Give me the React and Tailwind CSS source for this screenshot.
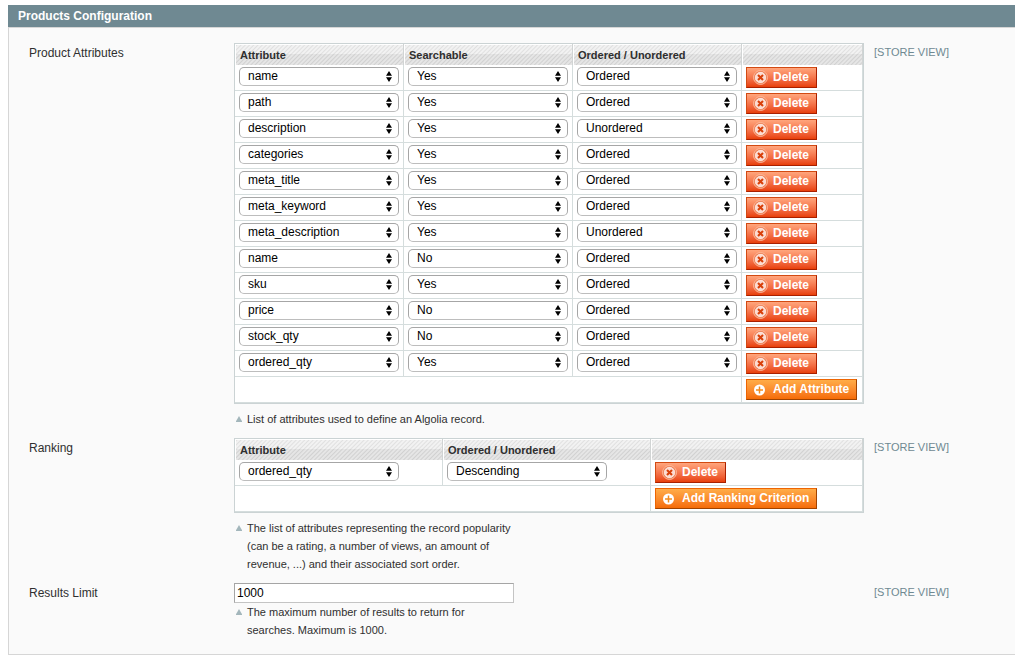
import { useId } from "react";

const productAttributes = [
  ["name", "Yes", "Ordered"],
  ["path", "Yes", "Ordered"],
  ["description", "Yes", "Unordered"],
  ["categories", "Yes", "Ordered"],
  ["meta_title", "Yes", "Ordered"],
  ["meta_keyword", "Yes", "Ordered"],
  ["meta_description", "Yes", "Unordered"],
  ["name", "No", "Ordered"],
  ["sku", "Yes", "Ordered"],
  ["price", "No", "Ordered"],
  ["stock_qty", "No", "Ordered"],
  ["ordered_qty", "Yes", "Ordered"],
];

const attributeOptions = [
  "name",
  "path",
  "description",
  "categories",
  "meta_title",
  "meta_keyword",
  "meta_description",
  "sku",
  "price",
  "stock_qty",
  "ordered_qty",
];

const productColumns = [
  { title: "Attribute", options: attributeOptions },
  { title: "Searchable", options: ["Yes", "No"] },
  { title: "Ordered / Unordered", options: ["Ordered", "Unordered"] },
];

const rankingColumns = [
  { title: "Attribute", options: attributeOptions },
  { title: "Ordered / Unordered", options: ["Ascending", "Descending"] },
];

function SelectBox({ label, options, value }) {
  return (
    <div className="relative w-40">
      <select
        aria-label={label}
        defaultValue={value}
        className="block h-[19px] w-full appearance-none rounded-[5px] border border-[#a6a6a6] border-b-[#bdbdbd] bg-white pr-5 pb-px pl-2 text-[12px] leading-[16px] text-black"
      >
        {options.map((option) => (
          <option key={option}>{option}</option>
        ))}
      </select>
      <svg
        viewBox="0 0 6 11"
        className="pointer-events-none absolute top-1 right-[7px] h-[11px] w-[6px]"
        aria-hidden="true"
      >
        <path d="M3 0 6 4.8H0ZM3 11 6 6.2H0Z" fill="#000" />
      </svg>
    </div>
  );
}

function DeleteIcon() {
  return (
    <svg viewBox="0 0 15 15" className="size-[15px]" aria-hidden="true">
      <circle cx="7.5" cy="7.5" r="6.9" fill="#e8602c" stroke="#ffc9b0" strokeWidth="0.9" />
      <circle cx="7.5" cy="7.5" r="5.4" fill="#fcdcd2" stroke="#fff" strokeWidth="0.6" />
      <path d="M5 5 10 10M10 5 5 10" stroke="#d8400a" strokeWidth="2.1" />
    </svg>
  );
}

function AddIcon() {
  return (
    <svg viewBox="0 0 15 15" className="size-[15px]" aria-hidden="true">
      <circle cx="6.5" cy="8" r="5.5" fill="#fff" />
      <path d="M6.5 4.5v7M3 8h7" stroke="#f28a1c" strokeWidth="1.5" />
    </svg>
  );
}

function DeleteButton() {
  return (
    <button
      type="button"
      className="flex h-[21px] items-center gap-[5px] border border-[#d24a12] border-r-[#a92000] border-b-[#a92000] bg-linear-to-b from-[#ffa57c] to-[#e83f05] pr-[7px] pb-px pl-[6px] text-[12px] leading-[18px] font-bold text-white"
    >
      <DeleteIcon />
      Delete
    </button>
  );
}

function AddButton({ children }) {
  return (
    <button
      type="button"
      className="flex h-[21px] items-center gap-[5px] border border-[#ed6502] border-r-[#a04300] border-b-[#a04300] bg-linear-to-b from-[#ffac47] to-[#f56c05] pr-[7px] pb-px pl-[6px] text-[12px] leading-[18px] font-bold whitespace-nowrap text-white"
    >
      <AddIcon />
      {children}
    </button>
  );
}

const headCell =
  "h-[21px] border-r border-[#d1d4d4] bg-[repeating-linear-gradient(135deg,#ffffff59_0px,#ffffff59_1px,#b4b4b433_2px,#ffffff59_3px),linear-gradient(to_bottom,#ebebeb_10px,#d8d8d8_10px)] px-1 py-0 text-left text-[11px] leading-[20px] font-bold text-[#2f2f2f] shadow-[inset_1px_1px_0_#fff]";
const bodyCell = "h-[26px] border-r border-b border-[#d5dddd] px-1 pt-[2px] pb-[2px] align-top";

function FieldTable({ label, columns, rows, columnWidth, addLabel }) {
  return (
    <table
      aria-label={label}
      className="w-full table-fixed border-separate border-spacing-0 border border-[#cbd3d4] bg-white"
    >
      <colgroup>
        {columns.map((column) => (
          <col key={column.title} className={columnWidth} />
        ))}
        <col />
      </colgroup>
      <thead>
        <tr>
          {columns.map((column) => (
            <th key={column.title} scope="col" className={headCell}>
              <span className="pl-px">{column.title}</span>
            </th>
          ))}
          <td className={headCell} />
        </tr>
      </thead>
      <tbody>
        {rows.map((row, index) => (
          <tr key={index}>
            {columns.map((column, position) => (
              <td key={column.title} className={bodyCell}>
                <SelectBox
                  label={`${column.title} ${index + 1}`}
                  options={column.options}
                  value={row[position]}
                />
              </td>
            ))}
            <td className={bodyCell}>
              <DeleteButton />
            </td>
          </tr>
        ))}
        <tr>
          <td colSpan={columns.length} className={bodyCell} />
          <td className={bodyCell}>
            <AddButton>{addLabel}</AddButton>
          </td>
        </tr>
      </tbody>
    </table>
  );
}

function Note({ children }) {
  return (
    <p className="flex w-[280px] gap-[5px] pl-[2px] text-[11px] leading-[18px] text-[#2f2f2f]">
      <svg viewBox="0 0 6 6" className="mt-[6px] size-[6px] shrink-0" aria-hidden="true">
        <path d="M3 0 6.4 6H-.4Z" fill="#a3b6bb" />
      </svg>
      <span>{children}</span>
    </p>
  );
}

function FieldRow({ label, htmlFor, children }) {
  return (
    <div className="flex items-start">
      <div className="w-[205px] shrink-0 text-[12px] leading-5 text-[#2f2f2f]">
        {htmlFor ? <label htmlFor={htmlFor}>{label}</label> : label}
      </div>
      <div className="w-[630px] shrink-0">{children}</div>
      <div className="pl-[10px] text-[11px] leading-[18px] whitespace-nowrap text-[#6f8992]">
        [STORE VIEW]
      </div>
    </div>
  );
}

export default function App() {
  const limitId = useId();
  return (
    <main className="overflow-x-hidden bg-white pt-[5px] pb-1 pl-2 font-['Liberation_Sans',Arial,sans-serif]">
      <h1 className="bg-[#6f8992] pl-[10px] text-[12px] leading-[22px] font-bold text-white">
        Products Configuration
      </h1>
      <section className="flex flex-col gap-[10px] border-y border-l border-[#d6d6d6] bg-[#fafafa] pt-[15px] pb-[15px] pl-5">
        <FieldRow label="Product Attributes">
          <div className="flex flex-col gap-[6px]">
            <FieldTable
              label="Product Attributes"
              columns={productColumns}
              rows={productAttributes}
              columnWidth="w-[169px]"
              addLabel="Add Attribute"
            />
            <Note>List of attributes used to define an Algolia record.</Note>
          </div>
        </FieldRow>
        <FieldRow label="Ranking">
          <div className="flex flex-col gap-[6px]">
            <FieldTable
              label="Ranking"
              columns={rankingColumns}
              rows={[["ordered_qty", "Descending"]]}
              columnWidth="w-[208px]"
              addLabel="Add Ranking Criterion"
            />
            <Note>
              The list of attributes representing the record popularity (can be a rating, a number
              of views, an amount of revenue, ...) and their associated sort order.
            </Note>
          </div>
        </FieldRow>
        <FieldRow label="Results Limit" htmlFor={limitId}>
          <input
            id={limitId}
            type="text"
            defaultValue="1000"
            className="block h-5 w-[280px] border border-[#c4c4c4] border-t-[#a5a5a5] border-l-[#a5a5a5] bg-white px-[2px] text-[12px] leading-[18px] text-black"
          />
          <Note>The maximum number of results to return for searches. Maximum is 1000.</Note>
        </FieldRow>
      </section>
    </main>
  );
}
